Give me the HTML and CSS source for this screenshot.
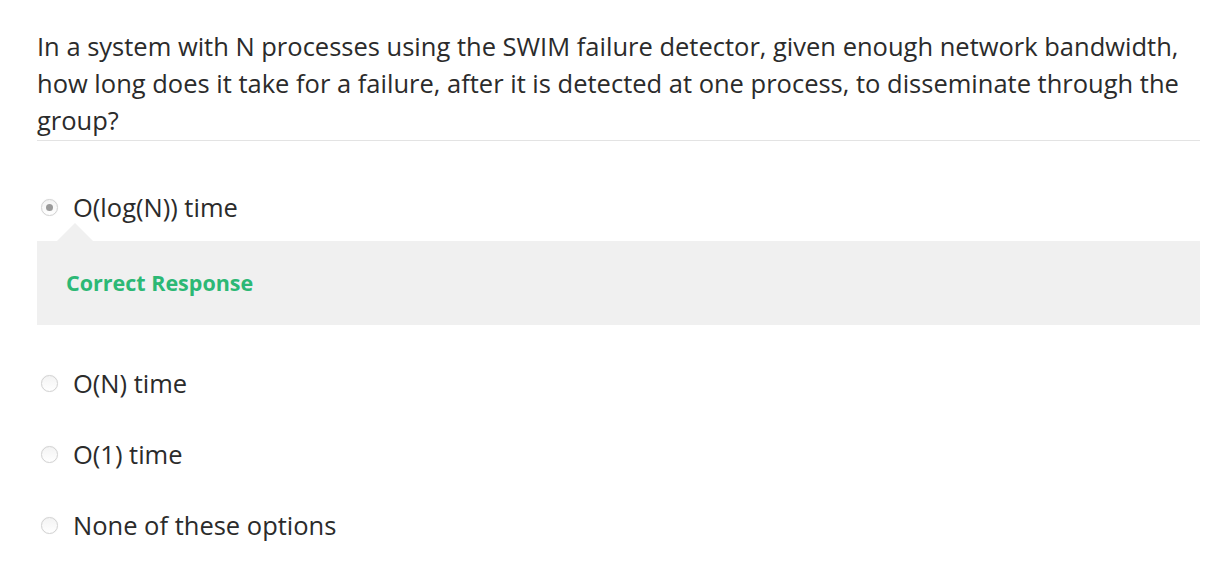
FILE: index.html
```html
<!DOCTYPE html>
<html>
<head>
<meta charset="utf-8">
<link rel="stylesheet" href="styles.css">
</head>
<body>
<div class="quiz">
  <div class="question">In a system with N processes using the SWIM failure detector, given enough network bandwidth, how long does it take for a failure, after it is detected at one process, to disseminate through the group?</div>
  <div class="options">
    <div class="option selected"><span class="radio"></span><span class="label">O(log(N)) time</span></div>
    <div class="feedback">Correct Response</div>
    <div class="option"><span class="radio"></span><span class="label">O(N) time</span></div>
    <div class="option"><span class="radio"></span><span class="label">O(1) time</span></div>
    <div class="option"><span class="radio"></span><span class="label">None of these options</span></div>
  </div>
</div>
</body>
</html>
```

FILE: styles.css
```css
html, body {
  margin: 0;
  padding: 0;
  background: #fff;
}
body {
  font-family: "Open Sans", "Liberation Sans", sans-serif;
  color: #2b2b2b;
}
.quiz {
  width: 1163px;
  margin-left: 37px;
  padding-top: 28px;
}
.question {
  font-size: 25.5px;
  line-height: 37px;
  padding-bottom: 1px;
  border-bottom: 1px solid #e3e3e3;
}
.options {
  margin-top: 31px;
}
.option {
  display: flex;
  align-items: center;
  padding: 17px 0;
  font-size: 25.5px;
  line-height: 37px;
}
.option.selected {
  padding-bottom: 15px;
}
.radio {
  box-sizing: border-box;
  width: 17px;
  height: 17px;
  margin-left: 4px;
  margin-right: 15px;
  border-radius: 50%;
  border: 1px solid #d2d2d2;
  background: linear-gradient(#f3f3f3, #fff);
  box-shadow: 0 0 1px rgba(0, 0, 0, 0.12);
  display: flex;
  align-items: center;
  justify-content: center;
  flex: none;
}
.option.selected .radio::after {
  content: "";
  width: 7px;
  height: 7px;
  border-radius: 50%;
  background: #9a9a9a;
}
.feedback {
  position: relative;
  background: #f0f0f0;
  padding: 28px 29px;
  line-height: 28px;
  font-size: 21.5px;
  font-weight: 700;
  color: #2cb875;
  margin-bottom: 23px;
}
.feedback::before {
  content: "";
  position: absolute;
  top: -18px;
  left: 20px;
  border-left: 18px solid transparent;
  border-right: 18px solid transparent;
  border-bottom: 18px solid #f0f0f0;
}
```
